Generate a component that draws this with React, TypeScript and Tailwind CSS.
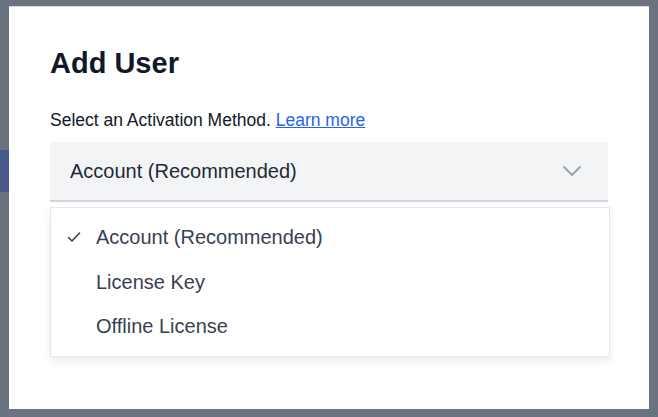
import { useState } from "react";

const options = ["Account (Recommended)", "License Key", "Offline License"];

export default function App() {
  const [selected, setSelected] = useState(0);

  return (
    <div
      className="relative w-[658px] h-[417px] bg-[#6b7280] overflow-hidden"
      style={{ fontFamily: '"Liberation Sans", Arial, sans-serif' }}
    >
      {/* bit of the page behind the backdrop */}
      <div className="absolute left-0 top-[150px] w-[9px] h-[42px] bg-[#46598a]" />

      <div className="absolute left-[9px] top-[6px] w-[640px] h-[403px] bg-white border-t border-[#d8dbe3] px-[41px] pt-[38px]">
        <h1 className="text-[29px] leading-[36px] font-bold text-[#111827]">Add User</h1>

        <p className="mt-[29px] text-[17.5px] leading-[20px] text-[#111827]">
          Select an Activation Method.{" "}
          <a href="#" className="text-[#2563eb] underline">
            Learn more
          </a>
        </p>

        <div className="mt-[12px] w-[558px] h-[60px] bg-[#f3f4f6] border-b-2 border-[#d1d5db] flex items-center justify-between pl-[20px] pr-[26px]">
          <span className="text-[20px] text-[#1f2937]">{options[selected]}</span>
          <svg width="20" height="12" viewBox="0 0 20 12" fill="none">
            <path d="M2 2l8 8 8-8" stroke="#9ca3af" strokeWidth="2" strokeLinecap="round" strokeLinejoin="round" />
          </svg>
        </div>

        <ul className="mt-[5px] w-[560px] bg-white border border-[#e5e7eb] shadow-[0_4px_8px_rgba(0,0,0,0.08)] py-[7px]">
          {options.map((o, i) => (
            <li
              key={o}
              onClick={() => setSelected(i)}
              className="h-[44.5px] flex items-center cursor-pointer text-[20px] text-[#374151]"
            >
              <span className="w-[45px] flex justify-end pr-[15px]">
                {i === selected && (
                  <svg width="14" height="12" viewBox="0 0 14 12" fill="none">
                    <path d="M1.5 6.5l3.5 3.5 7.5-8" stroke="#374151" strokeWidth="1.6" strokeLinecap="round" strokeLinejoin="round" />
                  </svg>
                )}
              </span>
              {o}
            </li>
          ))}
        </ul>
      </div>
    </div>
  );
}
